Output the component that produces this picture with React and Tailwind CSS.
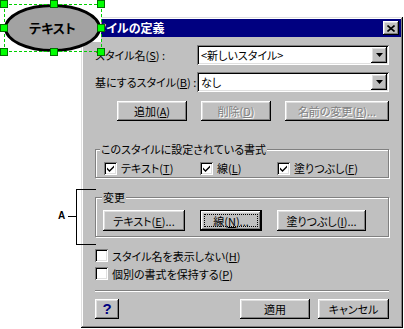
const raised = 'shadow-[inset_-1px_-1px_0_#000,inset_1px_1px_0_#fff,inset_-2px_-2px_0_#808080,inset_2px_2px_0_#dfdfdf]';
const sunken = 'shadow-[inset_1px_1px_0_#808080,inset_-1px_-1px_0_#fff,inset_2px_2px_0_#000,inset_-2px_-2px_0_#dfdfdf]';
const frame = 'shadow-[inset_-1px_-1px_0_#000,inset_1px_1px_0_#dfdfdf,inset_-2px_-2px_0_#808080,inset_2px_2px_0_#fff]';
const etched = 'border border-[#808080] shadow-[inset_1px_1px_0_#fff,1px_1px_0_#fff]';

const Btn = ({ children, className = '', disabled, focused }) => {
  if (focused) {
    return (
      <div className={`border border-black ${className}`}>
        <div className={`flex h-full items-center justify-center bg-[#c0c0c0] ${raised} p-[3px]`}>
          <div className="flex h-full w-full items-center justify-center border border-dotted border-black">
            {children}
          </div>
        </div>
      </div>
    );
  }
  return (
    <div
      className={`flex items-center justify-center bg-[#c0c0c0] ${raised} ${
        disabled ? 'text-[#808080] [text-shadow:1px_1px_0_#fff]' : 'text-black'
      } ${className}`}
    >
      {children}
    </div>
  );
};

const Combo = ({ value }) => (
  <div className={`flex h-[20px] w-[192px] items-center bg-white p-[2px] ${sunken}`}>
    <span className="flex-1 pl-[2px] leading-[16px] whitespace-nowrap">{value}</span>
    <div className={`flex h-[16px] w-[16px] items-center justify-center bg-[#c0c0c0] ${raised}`}>
      <svg width="7" height="4" viewBox="0 0 7 4">
        <path d="M0 0h7L3.5 4z" fill="#000" />
      </svg>
    </div>
  </div>
);

const Check = ({ checked }) => (
  <span className={`inline-flex h-[13px] w-[13px] shrink-0 items-center justify-center bg-white ${sunken}`}>
    {checked && (
      <svg width="7" height="7" viewBox="0 0 7 7">
        <path d="M0 2.5L2.5 5L7 0.5V2.5L2.5 7L0 4.5Z" fill="#000" />
      </svg>
    )}
  </span>
);

const Handle = ({ className }) => (
  <div className={`absolute h-[8px] w-[8px] border border-[#007000] bg-[#00ff00] ${className}`} />
);

export default function App() {
  return (
    <div className="relative h-[329px] w-[404px] overflow-hidden bg-white pl-[81px] pt-[17px] font-['Noto_Sans_CJK_JP',sans-serif] text-[11px] leading-[14px] text-black [font-feature-settings:'palt']">
      {/* dialog */}
      <div className={`flex h-[311px] w-[322px] flex-col bg-[#c0c0c0] p-[2px] ${frame}`}>
        <div className="flex h-[18px] items-center overflow-hidden bg-[#000080]">
          <span className="pl-[1px] whitespace-nowrap text-[12px] font-bold text-white">スタイルの定義</span>
          <div className={`ml-auto mr-[2px] flex h-[14px] w-[16px] items-center justify-center bg-[#c0c0c0] ${raised}`}>
            <svg width="8" height="7" viewBox="0 0 8 7">
              <path d="M0.5 0.5L7.5 6.5M7.5 0.5L0.5 6.5" stroke="#000" strokeWidth="1.6" />
            </svg>
          </div>
        </div>

        <div className="flex flex-col px-[12px]">
          <div className="mt-[8px] flex h-[20px] items-center">
            <span className="w-[102px] whitespace-nowrap">スタイル名(<u>S</u>) :</span>
            <Combo value={'<新しいスタイル>'} />
          </div>
          <div className="mt-[7px] flex h-[20px] items-center">
            <span className="w-[102px] whitespace-nowrap">基にするスタイル(<u>B</u>) :</span>
            <Combo value="なし" />
          </div>

          <div className="mt-[9px] flex h-[20px] gap-[14px] pl-[22px]">
            <Btn className="w-[70px]">追加(<u>A</u>)</Btn>
            <Btn className="w-[70px]" disabled>削除(<u>D</u>)</Btn>
            <Btn className="w-[104px]" disabled>名前の変更(<u>R</u>)...</Btn>
          </div>

          <div className={`relative mt-[28px] h-[29px] ${etched}`}>
            <span className="absolute -top-[8px] left-[4px] bg-[#c0c0c0] px-[1px] whitespace-nowrap">
              このスタイルに設定されている書式
            </span>
            <div className="flex items-center pl-[8px] pt-[11px]">
              <label className="flex w-[96px] items-center gap-[4px]">
                <Check checked />
                <span>テキスト(<u>T</u>)</span>
              </label>
              <label className="flex w-[77px] items-center gap-[4px]">
                <Check checked />
                <span>線(<u>L</u>)</span>
              </label>
              <label className="flex items-center gap-[4px]">
                <Check checked />
                <span>塗りつぶし(<u>F</u>)</span>
              </label>
            </div>
          </div>

          <div className={`relative mt-[19px] h-[40px] ${etched}`}>
            <span className="absolute -top-[8px] left-[6px] bg-[#c0c0c0] px-[1px]">変更</span>
            <div className="flex gap-[15px] pl-[7px] pt-[12px]">
              <Btn className="h-[21px] w-[82px]">テキスト(<u>E</u>)...</Btn>
              <Btn className="h-[21px] w-[62px]" focused>線(<u>N</u>)...</Btn>
              <Btn className="h-[21px] w-[89px]">塗りつぶし(<u>I</u>)...</Btn>
            </div>
          </div>

          <label className="mt-[12px] flex h-[13px] items-center gap-[4px]">
            <Check />
            <span>スタイル名を表示しない(<u>H</u>)</span>
          </label>
          <label className="mt-[5px] flex h-[13px] items-center gap-[4px]">
            <Check />
            <span>個別の書式を保持する(<u>P</u>)</span>
          </label>

          <div className="mt-[10px] h-[2px] border-t border-b border-t-[#808080] border-b-white" />

          <div className="mt-[7px] flex h-[20px]">
            <Btn className="w-[24px]">
              <span className="font-['Liberation_Sans',sans-serif] text-[15px] font-bold text-[#000080]">?</span>
            </Btn>
            <Btn className="ml-auto w-[70px]">適用</Btn>
            <Btn className="ml-[8px] w-[71px]">キャンセル</Btn>
          </div>
        </div>
      </div>

      {/* pasted ellipse object over the dialog corner */}
      <div className="absolute left-0 top-0 h-[42px] w-[101px] bg-white" />
      <div className="absolute left-[4px] top-[4px] flex h-[48px] w-[97px] items-center justify-center rounded-[50%] border-[3px] border-black bg-[#a2a2a2]">
        <span className="text-[13px] font-bold">テキスト</span>
      </div>
      <div className="absolute left-[4px] top-[4px] h-[48px] w-[98px] border border-dashed border-[#00d000]" />
      <Handle className="left-0 top-0" />
      <Handle className="left-[50px] top-0" />
      <Handle className="left-[97px] top-0" />
      <Handle className="left-0 top-[24px]" />
      <Handle className="left-[97px] top-[24px]" />
      <Handle className="left-0 top-[48px]" />
      <Handle className="left-[50px] top-[48px]" />
      <Handle className="left-[97px] top-[48px]" />

      {/* callout A */}
      <div className="absolute left-[76px] top-[189px] h-[56px] w-[1px] bg-black" />
      <div className="absolute left-[76px] top-[189px] h-[1px] w-[20px] bg-black" />
      <div className="absolute left-[76px] top-[244px] h-[1px] w-[20px] bg-black" />
      <div className="absolute left-[68px] top-[216px] h-[1px] w-[8px] bg-black" />
      <span className="absolute left-[58px] top-[211px] font-['Liberation_Sans',sans-serif] text-[10px] font-bold leading-none">
        A
      </span>
    </div>
  );
}
